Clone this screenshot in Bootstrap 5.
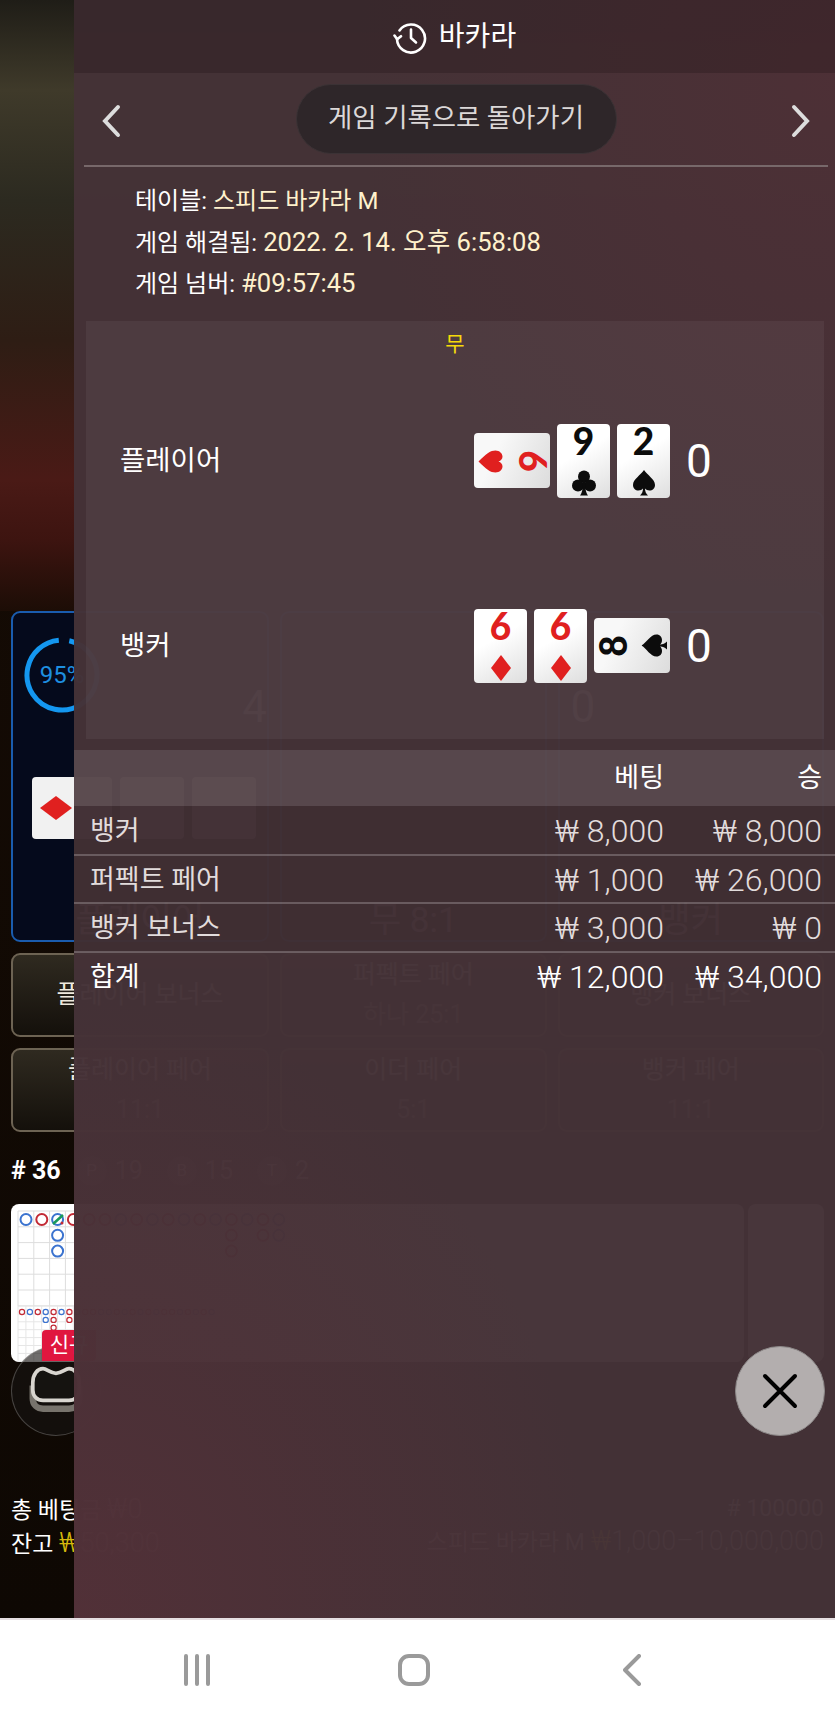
<!DOCTYPE html>
<html lang="ko">
<head>
    <meta charset="UTF-8">
    <meta name="viewport" content="width=device-width, initial-scale=1.0">
    <title>바카라</title>
    <link href="https://cdn.jsdelivr.net/npm/bootstrap@5.3.0/dist/css/bootstrap.min.css" rel="stylesheet">
    <style>
        body {
            background: #fff;
            font-family: Roboto, "Noto Sans CJK KR", sans-serif;
            color: #fff;
            width: 835px;
        }
        .phone { position: relative; height: 1716px; overflow: hidden; }

        /* game behind the sheet */
        .game { height: 1620px; background: linear-gradient(#170c05, #0e0803); }
        .video-zone {
            height: 611px;
            background: linear-gradient(#1f1d17 0, #3f3a2a 90px, #2c2a20 200px, #2e1d14 340px, #4a1a16 480px, #3d1410 540px, #1c0d06 611px);
        }
        .bet-zone { padding: 0 11px; }
        .bet-grid { display: grid; grid-template-columns: 258px 1fr 1fr; gap: 11px; margin-bottom: 11px; }
        .bet-main {
            height: 331px;
            background: #050a1c;
            border: 2px solid #1a5cae;
            border-radius: 9px;
            padding: 24px 0 0 11px;
        }
        .ring-box { width: 76px; height: 76px; position: relative; }
        .ring-label { font-size: 24px; color: #1e8fe0; }
        .bet-num { font-size: 44px; color: #ddd; line-height: 1; margin-bottom: -16px; }
        .bet-cards { margin-top: 64px; height: 62px; }
        .mini-card { width: 64px; height: 62px; background: #f1f1f1; border-radius: 4px; }
        .mini-card-wide { width: 80px; margin-left: 5px; }
        .bet-label { font-size: 35px; margin-top: 56px; padding-right: 11px; }
        .bet-side {
            height: 84px;
            background: linear-gradient(#2f2a20, #14100b);
            border: 2px solid #6d6353;
            border-radius: 9px;
            font-size: 25px;
            line-height: 40px;
            color: #efe9dd;
        }
        .bet-odds { color: #a89c80; }
        .count-row { height: 72px; padding: 16px 0 10px; font-size: 25px; font-weight: 700; }
        .count-dot {
            width: 30px; height: 30px; border-radius: 50%;
            background: #333; font-size: 17px; font-weight: 400;
        }
        .count-num { font-weight: 400; color: #ccc; }
        .road-wrap { height: 158px; }
        .road-main {
            flex: 1;
            background-color: #fff;
            border-radius: 8px;
            overflow: hidden;
        }
        .road-side { width: 76px; background: #fff; border-radius: 8px; }
        .chip-ring {
            position: absolute; left: 11px; top: 1346px;
            width: 90px; height: 90px; border-radius: 50%;
            background: rgba(22, 20, 17, .62);
            border: 1px solid rgba(255, 255, 255, .22);
        }
        .new-tag {
            position: absolute; left: 42px; top: 1330px;
            width: 54px; height: 31px;
            background: #e0163f; border-radius: 4px 0 4px 0;
            font-size: 21px; line-height: 31px; text-align: center;
        }
        .foot-info { margin-top: 131px; font-size: 23px; line-height: 32px; }
        .foot-num { font-size: 27px; font-weight: 300; }
        .won-yellow { color: #d6b90c; }
        .foot-limit { color: #ddd; }

        /* history sheet */
        .sheet {
            position: absolute; left: 74px; top: 0; right: 0; height: 1618px;
            background:
                radial-gradient(ellipse 480px 520px at 100% 5%, rgba(84, 46, 54, .55), rgba(84, 46, 54, 0)),
                radial-gradient(ellipse 520px 620px at 0 100%, rgba(86, 48, 56, .75), rgba(86, 48, 56, 0)),
                rgba(68, 50, 55, .98);
        }
        .sheet-head {
            height: 73px;
            background: rgba(32, 20, 22, .3);
            font-size: 28px;
        }
        .back-row { height: 94px; margin: 0 7px 0 10px; border-bottom: 2px solid #77686a; }
        .back-btn { background: #2e2629; color: #dcd8d8; font-size: 26.4px; width: 321px; height: 70px; border: 1px solid #3b3235; }
        .back-btn:hover { background: #2e2629; color: #dcd8d8; }
        .meta-box { padding: 14px 0 0 61px; font-size: 24px; line-height: 40.5px; height: 154px; }
        .meta-val { color: #fff1cc; }
        .meta-num { color: #fff1cc; font-size: 25.6px; }
        .result-box {
            height: 418px; margin: 0 11px 0 12px;
            background: rgba(255, 255, 255, .05);
            position: relative;
        }
        .result-tag { color: #f5d90a; font-size: 21px; line-height: 30px; padding-top: 8px; text-align: center; height: 47px; }
        .hand-row { height: 185px; padding-left: 34px; padding-right: 113px; font-size: 27.5px; }
        .hand-cards { gap: 7px; }
        .hand-score { font-size: 46px; width: 25px; margin-left: 9px; line-height: 1; }
        .p-card {
            width: 53px; height: 74px; border-radius: 4px;
            background: linear-gradient(150deg, #fff 40%, #dedede);
            flex-shrink: 0;
        }
        .p-card-wide {
            width: 76px; height: 55px; border-radius: 4px;
            background: linear-gradient(115deg, #f8f8f8 30%, #dcdcdc);
        }
        .p-face { width: 53px; height: 74px; flex-shrink: 0; }
        .p-face-r { transform: rotate(90deg); }
        .p-face-l { transform: rotate(-90deg); }
        .p-digit { font-family: Lato, sans-serif; font-weight: 900; font-size: 37px; line-height: 34px; height: 36px; }
        .p-red { color: #e0201f; }
        .p-black { color: #0c0c0c; }
        .p-suit { width: 24px; height: 26px; fill: currentColor; margin-top: 1px; }
        .bets-table { margin: 11px 0 0; --bs-table-bg: transparent; --bs-table-color: #e2dcdc; color: #e2dcdc; font-size: 27px; }
        .bets-table th, .bets-table td { padding: 2px 13px 0 16px; vertical-align: middle; height: 48.5px; border-bottom: 2px solid rgba(255, 255, 255, .22); white-space: nowrap; line-height: 1.2; }
        .bets-table thead th { height: 56px; padding-top: 0; background: rgba(255, 255, 255, .11); color: #fff; font-weight: 400; border-bottom: 0; }
        .bets-table .col-amt { width: 150px; padding-left: 0; padding-right: 0; text-align: right; }
        .bets-table .col-win { width: 171px; padding-left: 0; text-align: right; }
        .bets-table tbody td.col-amt, .bets-table tbody td.col-win, .bets-table tfoot td.col-amt, .bets-table tfoot td.col-win { font-size: 32px; font-weight: 300; }
        .bets-table tbody { background: rgba(20, 14, 14, .08); }
        .bets-table tfoot td { color: #fff; border-bottom: 0; }
        .close-btn {
            position: absolute; right: 10px; top: 1346px;
            width: 90px; height: 90px;
            background: #b3aeae; border: 1px solid #8c8888;
        }
        .close-btn:hover { background: #b3aeae; }

        /* android nav */
        .nav-strip { position: absolute; left: 0; right: 0; top: 1618px; height: 98px; background: #fff; border-top: 2px solid #e6dfe2; }
        .nav-icon { position: absolute; top: 34px; stroke: #9a9a9a; fill: none; stroke-width: 4; stroke-linecap: round; stroke-linejoin: round; }
    </style>
</head>
<body>
    <svg width="0" height="0" class="position-absolute">
        <symbol id="suit-heart" viewBox="0 0 24 26"><path d="M12 25C4 17 1 13 1 8C1 4 4 1 7 1C9.500 1 11 2.500 12 5C13 2.500 14.500 1 17 1C20 1 23 4 23 8C23 13 20 17 12 25Z"/></symbol>
        <symbol id="suit-diamond" viewBox="0 0 24 26"><path d="M12 0L22 13L12 26L2 13Z"/></symbol>
        <symbol id="suit-spade" viewBox="0 0 24 26"><path d="M12 0C9 5 1 9 1 15C1 18.500 3.500 20.500 6.500 20.500C8.500 20.500 10 19.800 11 18.500C11 21.500 10 23.500 8 25.500H16C14 23.500 13 21.500 13 18.500C14 19.800 15.500 20.500 17.500 20.500C20.500 20.500 23 18.500 23 15C23 9 15 5 12 0Z"/></symbol>
        <symbol id="suit-club" viewBox="0 0 24 26"><circle cx="12" cy="6.500" r="6"/><circle cx="6" cy="15.500" r="6"/><circle cx="18" cy="15.500" r="6"/><path d="M11 10C11 19 10 23 8 25.500H16C14 23 13 19 13 10Z"/></symbol>
    </svg>

    <div class="phone">
        <!-- 게임 화면 (시트 뒤) -->
        <div class="game">
            <div class="video-zone"></div>
            <div class="bet-zone">
                <div class="bet-grid">
                    <div class="bet-main text-center">
                        <div class="d-flex justify-content-between align-items-end">
                            <div class="ring-box">
                                <svg width="76" height="76" viewBox="0 0 76 76" class="position-absolute top-0 start-0">
                                    <circle cx="38" cy="38" r="35" fill="none" stroke="#1497f0" stroke-width="5" stroke-dasharray="209 11" transform="rotate(-78 38 38)"/>
                                </svg>
                                <div class="ring-label h-100 d-flex align-items-center justify-content-center">95%</div>
                            </div>
                            <div class="bet-num">4</div>
                        </div>
                        <div class="bet-cards d-flex">
                            <div class="mini-card mini-card-wide d-flex align-items-center ps-2 ms-2">
                                <svg width="32" height="24" viewBox="0 0 32 24"><path d="M16 0L32 12L16 24L0 12Z" fill="#e0201f"/></svg>
                            </div>
                            <div class="mini-card ms-2"></div>
                            <div class="mini-card ms-2"></div>
                        </div>
                        <div class="bet-label">플레이어</div>
                    </div>
                    <div class="bet-main text-center">
                        <div class="ring-box"></div>
                        <div class="bet-cards"></div>
                        <div class="bet-label">무 8:1</div>
                    </div>
                    <div class="bet-main text-center">
                        <div class="d-flex align-items-end ring-box"><div class="bet-num">0</div></div>
                        <div class="bet-cards"></div>
                        <div class="bet-label">뱅커</div>
                    </div>
                </div>
                <div class="bet-grid">
                    <div class="bet-side d-flex align-items-center justify-content-center">플레이어 보너스</div>
                    <div class="bet-side text-center">퍼펙트 페어<br><span class="bet-odds">하나 25:1</span></div>
                    <div class="bet-side d-flex align-items-center justify-content-center">뱅커 보너스</div>
                </div>
                <div class="bet-grid mb-0">
                    <div class="bet-side text-center">플레이어 페어<br><span class="bet-odds">11:1</span></div>
                    <div class="bet-side text-center">이더 페어<br><span class="bet-odds">5:1</span></div>
                    <div class="bet-side text-center">뱅커 페어<br><span class="bet-odds">11:1</span></div>
                </div>
                <div class="count-row d-flex align-items-center gap-2">
                    <span class="me-2"># 36</span>
                    <span class="count-dot d-flex align-items-center justify-content-center">P</span><span class="count-num me-3">19</span>
                    <span class="count-dot d-flex align-items-center justify-content-center">B</span><span class="count-num me-3">15</span>
                    <span class="count-dot d-flex align-items-center justify-content-center">T</span><span class="count-num">2</span>
                </div>
                <div class="road-wrap d-flex gap-1">
                    <div class="road-main">
                        <svg id="roadSvg" width="734" height="158" viewBox="0 0 734 158"></svg>
                    </div>
                    <div class="road-side"></div>
                </div>
                <div class="foot-info d-flex justify-content-between">
                    <div>
                        <div>총 베팅금 <span class="foot-num">₩0</span></div>
                        <div>잔고 <span class="foot-num"><span class="won-yellow">₩</span>50,300</span></div>
                    </div>
                    <div class="text-end foot-limit">
                        <div># 100000</div>
                        <div>스피드 바카라 M <span class="foot-num"><span class="won-yellow">₩</span>1,000–10,000,000</span></div>
                    </div>
                </div>
            </div>
        </div>
        <div class="chip-ring d-flex align-items-center justify-content-center">
            <svg width="58" height="52" viewBox="0 0 62 56" fill="none">
                <path d="M6 22v14c0 7 5 11 11 11h28c6 0 11-4 11-11V22" stroke="#77736c" stroke-width="7"/>
                <path d="M17 4c4 0 8 5 14 5s10-5 14-5c6 0 11 6 11 15v8c0 7-5 11-11 11H17C11 38 6 34 6 27v-8C6 10 11 4 17 4Z" fill="#151310" stroke="#d8d5cf" stroke-width="4"/>
            </svg>
        </div>
        <div class="new-tag">신규</div>

        <!-- 게임 기록 시트 -->
        <div class="sheet">
            <div class="sheet-head d-flex align-items-center justify-content-center gap-2">
                <svg width="34" height="34" viewBox="0 0 34 34" fill="none" stroke="#fff" stroke-width="2.600" stroke-linecap="round" stroke-linejoin="round">
                    <path d="M6.500 10.500A14 14 0 1 1 4 19"/>
                    <path d="M1.500 15.500L4.200 19.300L8 16.200"/>
                    <path d="M18 9.500V18L23 22.500"/>
                </svg>
                <span class="ms-1">바카라</span>
            </div>
            <div class="back-row d-flex align-items-center justify-content-between">
                <svg class="ms-3 mt-1" width="22" height="34" viewBox="0 0 22 34" fill="none" stroke="#ddd" stroke-width="4" stroke-linecap="round"><path d="M18 3L5 17L18 31"/></svg>
                <button type="button" class="btn back-btn rounded-pill p-0 d-flex align-items-center justify-content-center">게임 기록으로 돌아가기</button>
                <svg class="me-3 mt-1" width="22" height="34" viewBox="0 0 22 34" fill="none" stroke="#ddd" stroke-width="4" stroke-linecap="round"><path d="M4 3L17 17L4 31"/></svg>
            </div>
            <div class="meta-box">
                <div>테이블: <span class="meta-val">스피드 바카라 M</span></div>
                <div>게임 해결됨: <span class="meta-num">2022. 2. 14. 오후 6:58:08</span></div>
                <div>게임 넘버: <span class="meta-num">#09:57:45</span></div>
            </div>
            <div class="result-box">
                <div class="result-tag">무</div>
                <div class="hand-row d-flex align-items-center justify-content-between">
                    <span>플레이어</span>
                    <div class="hand-cards d-flex align-items-center">
                        <div class="p-card-wide d-flex align-items-center justify-content-center">
                            <div class="p-face p-face-r text-center p-red">
                                <div class="p-digit">6</div>
                                <svg class="p-suit"><use href="#suit-heart"/></svg>
                            </div>
                        </div>
                        <div class="p-card text-center p-black">
                            <div class="p-digit">9</div>
                            <svg class="p-suit"><use href="#suit-club"/></svg>
                        </div>
                        <div class="p-card text-center p-black">
                            <div class="p-digit">2</div>
                            <svg class="p-suit"><use href="#suit-spade"/></svg>
                        </div>
                        <div class="hand-score">0</div>
                    </div>
                </div>
                <div class="hand-row d-flex align-items-center justify-content-between">
                    <span>뱅커</span>
                    <div class="hand-cards d-flex align-items-center">
                        <div class="p-card text-center p-red">
                            <div class="p-digit">6</div>
                            <svg class="p-suit"><use href="#suit-diamond"/></svg>
                        </div>
                        <div class="p-card text-center p-red">
                            <div class="p-digit">6</div>
                            <svg class="p-suit"><use href="#suit-diamond"/></svg>
                        </div>
                        <div class="p-card-wide d-flex align-items-center justify-content-center">
                            <div class="p-face p-face-l text-center p-black">
                                <div class="p-digit">8</div>
                                <svg class="p-suit"><use href="#suit-spade"/></svg>
                            </div>
                        </div>
                        <div class="hand-score">0</div>
                    </div>
                </div>
            </div>
            <table class="table table-borderless bets-table">
                <thead>
                    <tr><th></th><th class="col-amt">베팅</th><th class="col-win">승</th></tr>
                </thead>
                <tbody>
                    <tr><td>뱅커</td><td class="col-amt">₩ 8,000</td><td class="col-win">₩ 8,000</td></tr>
                    <tr><td>퍼펙트 페어</td><td class="col-amt">₩ 1,000</td><td class="col-win">₩ 26,000</td></tr>
                    <tr><td>뱅커 보너스</td><td class="col-amt">₩ 3,000</td><td class="col-win">₩ 0</td></tr>
                </tbody>
                <tfoot>
                    <tr><td>합계</td><td class="col-amt">₩ 12,000</td><td class="col-win">₩ 34,000</td></tr>
                </tfoot>
            </table>
            <button type="button" class="btn close-btn rounded-circle p-0 d-flex align-items-center justify-content-center" aria-label="닫기">
                <svg width="36" height="36" viewBox="0 0 36 36" stroke="#000" stroke-width="4" stroke-linecap="round"><path d="M3 3L33 33M33 3L3 33"/></svg>
            </button>
        </div>

        <div class="nav-strip">
            <svg class="nav-icon" style="left:183px" width="28" height="32" viewBox="0 0 28 32"><path d="M3 2V30M14 2V30M25 2V30"/></svg>
            <svg class="nav-icon" style="left:398px" width="32" height="32" viewBox="0 0 32 32"><rect x="2" y="2" width="28" height="28" rx="9"/></svg>
            <svg class="nav-icon" style="left:623px" width="18" height="32" viewBox="0 0 18 32"><path d="M16 2L2 16L16 30"/></svg>
        </div>
    </div>

    <script src="https://cdn.jsdelivr.net/npm/bootstrap@5.3.0/dist/js/bootstrap.bundle.min.js"></script>
    <script>
        // 로드맵: 격자와 원을 데이터로 그림
        const bigRoad = [[0,0,'b'],[1,0,'r'],[2,0,'b'],[3,0,'r'],[2,1,'b'],[2,2,'b'],[4,0,'r'],[5,0,'r'],[6,0,'b'],[7,0,'r'],[8,0,'b'],[9,0,'r'],[10,0,'b'],[11,0,'r'],[12,0,'b'],[13,0,'r'],[13,1,'r'],[13,2,'r'],[14,0,'b'],[15,0,'r'],[15,1,'r'],[16,0,'b'],[16,1,'b']];
        const smallRoad = 'rbrbrbrbrrbbrbrbrbrrbrbrb';
        const colors = { r: '#c22a35', b: '#3b73cf' };
        let svg = '';
        for (let x = 7; x <= 734; x += 15.8) {
            svg += `<line x1="${x}" y1="7" x2="${x}" y2="102" stroke="#ddd"/>`;
        }
        for (let y = 7; y <= 102; y += 15.8) {
            svg += `<line x1="7" y1="${y}" x2="734" y2="${y}" stroke="#ddd"/>`;
        }
        for (let x = 7; x <= 734; x += 7.900) {
            svg += `<line x1="${x}" y1="102" x2="${x}" y2="158" stroke="#e6e6e6"/>`;
        }
        for (let y = 102; y <= 158; y += 7.900) {
            svg += `<line x1="7" y1="${y}" x2="734" y2="${y}" stroke="#e6e6e6"/>`;
        }
        bigRoad.forEach(([col, row, c]) => {
            svg += `<circle cx="${15 + col * 15.8}" cy="${15.500 + row * 15.8}" r="5.500" fill="none" stroke="${colors[c]}" stroke-width="2"/>`;
        });
        smallRoad.split('').forEach((c, i) => {
            svg += `<circle cx="${11 + i * 7.900}" cy="108" r="2.600" fill="none" stroke="${colors[c]}" stroke-width="1.200"/>`;
        });
        [[3,1,'b'],[4,1,'r'],[6,1,'r'],[4,2,'r']].forEach(([col, row, c]) => {
            svg += `<circle cx="${11 + col * 7.900}" cy="${108 + row * 7.900}" r="2.600" fill="none" stroke="${colors[c]}" stroke-width="1.200"/>`;
        });
        svg += '<path d="M42 20L52 11" stroke="#1a9a5a" stroke-width="2.500"/><circle cx="51" cy="19" r="1.500" fill="#c22a35"/>';
        document.getElementById('roadSvg').innerHTML = svg;
    </script>
</body>
</html>
